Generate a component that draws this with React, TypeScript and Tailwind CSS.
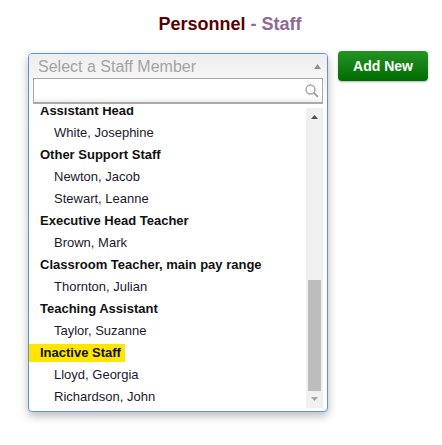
import React from "react";

const rows: [string, boolean][] = [
  ["Assistant Head", true],
  ["White, Josephine", false],
  ["Other Support Staff", true],
  ["Newton, Jacob", false],
  ["Stewart, Leanne", false],
  ["Executive Head Teacher", true],
  ["Brown, Mark", false],
  ["Classroom Teacher, main pay range", true],
  ["Thornton, Julian", false],
  ["Teaching Assistant", true],
  ["Taylor, Suzanne", false],
  ["Inactive Staff", true],
  ["Lloyd, Georgia", false],
  ["Richardson, John", false],
];

export default function App() {
  return (
    <div className="w-[442px] h-[445px] bg-white font-['Liberation_Sans',Arial,sans-serif] overflow-hidden">
      <h1 className="pt-[15px] h-[51px] text-center text-[18px] leading-[18px] font-bold pl-[18px]">
        <span className="text-[#5c0000]">Personnel</span>
        <span className="text-[#8e6a94]"> - Staff</span>
      </h1>
      <div className="flex items-start pl-[28px] gap-[10px]">
        <div className="mt-[2px] w-[300px] h-[359px] rounded-[4px] border border-[#5b93ea] bg-white shadow-[0_4px_10px_rgba(0,0,0,0.28)] overflow-hidden relative">
          <div className="h-[53px] bg-gradient-to-b from-[#eeeeee] to-white relative">
            <div className="pl-[9px] pt-[3px] text-[16px] leading-[19px] text-[#a3a3a3]">Select a Staff Member</div>
            <svg className="absolute right-[6px] top-[10px]" width="7" height="5" viewBox="0 0 7 5">
              <path d="M3.5 0 L7 5 L0 5 Z" fill="#8f8f8f" />
            </svg>
            <div className="absolute left-[4px] top-[24px] w-[290px] h-[26px] border border-b-2 border-[#a9a9a9] bg-gradient-to-b from-white from-[80%] to-[#eeeeee]">
              <svg className="absolute left-[271px] top-[5px]" width="14" height="14" viewBox="0 0 14 14" fill="none" stroke="#a6a6a6">
                <circle cx="5.5" cy="5.5" r="4.5" strokeWidth="1.4" />
                <path d="M8.8 8.8 L13 13" strokeWidth="2" />
              </svg>
            </div>
          </div>
          <div className="h-[304px] overflow-hidden relative">
            <div className="-mt-[7px] pl-[11px]">
              {rows.map(([t, head]) =>
                head ? (
                  <div key={t} className="h-[22px] flex items-center text-[13px] font-bold text-[#111111]">
                    {t === "Inactive Staff" ? (
                      <span className="block w-[96px] h-[18px] leading-[18px] -ml-[11px] pl-[11px] bg-[#ffe600]">{t}</span>
                    ) : (
                      t
                    )}
                  </div>
                ) : (
                  <div key={t} className="h-[22px] pl-[14px] text-[13px] leading-[22px] text-[#1a1a2e]">
                    {t}
                  </div>
                )
              )}
            </div>
            <div className="absolute right-[4px] top-[1px] w-[17px] h-[300px] bg-[#f0f0f0]">
              <svg className="absolute left-[5px] top-[7px]" width="7" height="4" viewBox="0 0 7 4">
                <path d="M3.5 0 L7 4 L0 4 Z" fill="#505050" />
              </svg>
              <div className="absolute left-[2px] top-[172px] w-[13px] h-[111px] bg-[#bdbdbd]" />
              <svg className="absolute left-[5px] top-[289px]" width="7" height="4" viewBox="0 0 7 4">
                <path d="M3.5 4 L7 0 L0 0 Z" fill="#a3a3a3" />
              </svg>
            </div>
          </div>
        </div>
        <button className="w-[90px] h-[30px] rounded-[4px] bg-gradient-to-b from-[#229522] to-[#006c00] text-white text-[14px] font-bold leading-[30px] text-center shadow-[0_1px_2px_rgba(0,0,0,0.3)]">
          Add New
        </button>
      </div>
    </div>
  );
}
